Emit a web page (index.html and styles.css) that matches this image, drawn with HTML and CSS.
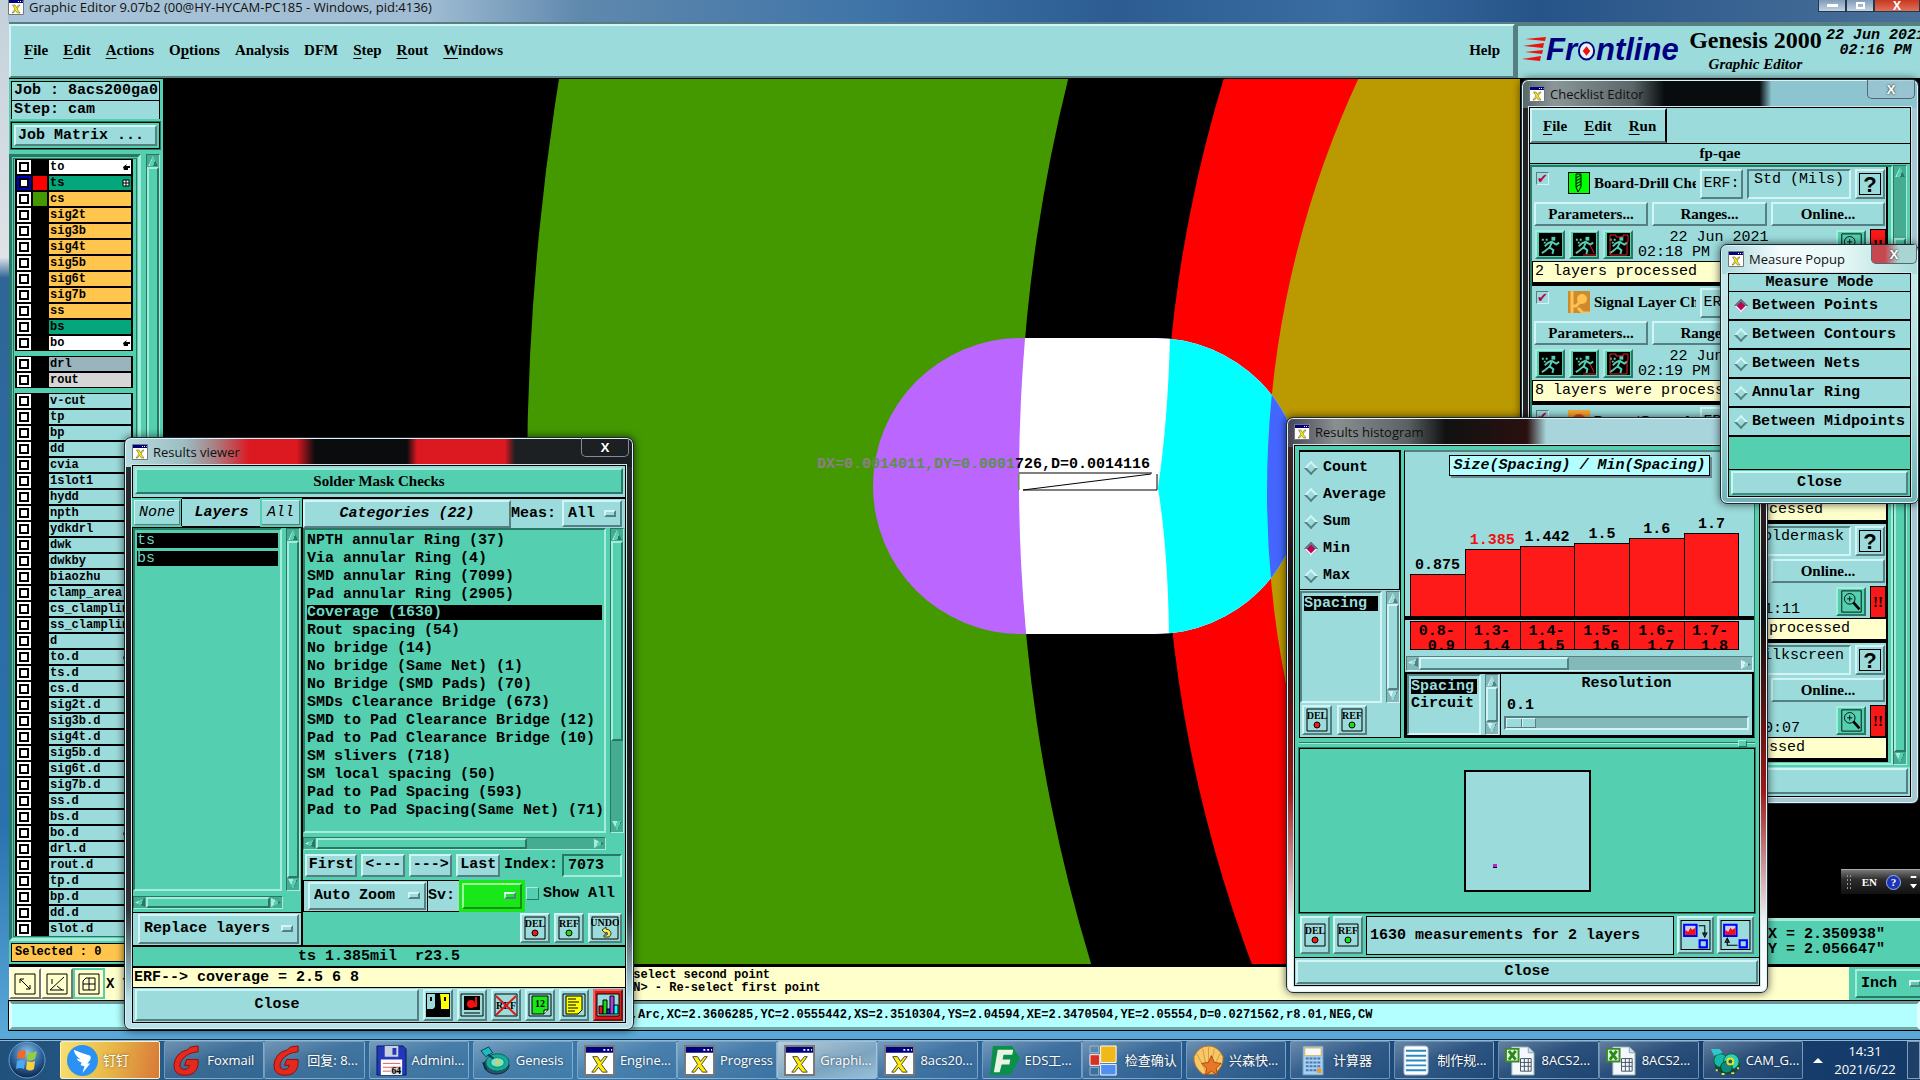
FILE: index.html
```html
<!DOCTYPE html>
<html lang="en">
<head>
    <meta charset="UTF-8">
    <meta name="viewport" content="width=device-width, initial-scale=1.0">
    <title>Graphic Editor 9.07b2</title>
    <link rel="stylesheet" href="styles.css">
</head>
<body>
    <!-- shared icons -->
    <svg class="defs" aria-hidden="true">
        <symbol id="i-x" viewBox="0 0 32 32">
            <path d="M1 1h30v30H1z" fill="#fff" stroke="#777" stroke-width="2"/>
            <path d="M2 2h28v6H2z" fill="#000080"/>
            <path d="M20 4h2v2h-2zM24 4h2v2h-2zM28 4h1v2h-1z" fill="#fff"/>
            <path d="M9 12h5l3 5 4-5h3l-6 8 6 8h-5l-4-5-4 5H8l6-8z" fill="#ffee00" stroke="#444" stroke-width="1"/>
        </symbol>
        <symbol id="i-del" viewBox="0 0 22 24">
            <path d="M1 1h20v22H1z" fill="none" stroke="#000"/>
            <text x="11" y="11" class="tiny">DEL</text>
            <circle cx="11" cy="17" r="3" fill="#f01818" stroke="#000"/>
        </symbol>
        <symbol id="i-ref" viewBox="0 0 22 24">
            <path d="M1 1h20v22H1z" fill="none" stroke="#000"/>
            <text x="11" y="11" class="tiny">REF</text>
            <circle cx="11" cy="17" r="3" fill="#18e018" stroke="#000"/>
        </symbol>
        <symbol id="i-undo" viewBox="0 0 28 24">
            <path d="M1 1h26v22H1z" fill="none" stroke="#000"/>
            <text x="14" y="10" class="tiny">UNDO</text>
            <path d="M15 11l-4 3 4 4v-2q3 1 1 3h-3v2h5q4-4 0-7l-3-1z" fill="#ffee44" stroke="#333"/>
        </symbol>
        <symbol id="i-run" viewBox="0 0 24 24">
            <path d="M0 0h24v24H0z" fill="#000"/>
            <path d="M13 4h4v4h-4z" fill="#54cfb0"/>
            <path d="M14 9l-3 6 4 3-1 4M11 15l-5 4-3 2M13 9l5 3 3-2M13 9l-4 2-3 3" fill="none" stroke="#54cfb0" stroke-width="2"/>
            <path d="M3 6h2v2H3zM7 6h2v2H7zM5 9h2v2H5z" fill="#54cfb0"/>
        </symbol>
        <symbol id="i-find" viewBox="0 0 24 26">
            <path d="M1 1h22v24H1z" fill="none" stroke="#000"/>
            <circle cx="10" cy="10" r="6" fill="none" stroke="#000"/>
            <path d="M10 7v6M7 10h6" stroke="#000"/>
            <path d="M14 14l7 8" stroke="#000" stroke-width="3"/>
        </symbol>
        <symbol id="i-drill" viewBox="0 0 22 22">
            <path d="M0 0h22v22H0z" fill="#0f0" stroke="#000" stroke-width="2"/>
            <path d="M8 2h5v13l-3 5-2-5zM8 6l5-3M8 9l5-3M8 12l5-3M8 15l5-3" fill="none" stroke="#000"/>
        </symbol>
        <symbol id="i-signal" viewBox="0 0 22 22">
            <path d="M0 0h22v22H0z" fill="#cf8a30"/>
            <path d="M4 0v22M4 15h4l4-4M10 17l5 5h7" fill="none" stroke="#ffc24c" stroke-width="3"/>
            <circle cx="14" cy="8" r="5" fill="#ffc24c"/>
        </symbol>
        <symbol id="i-power" viewBox="0 0 22 22">
            <path d="M0 0h22v22H0z" fill="#f8a830"/>
            <circle cx="11" cy="11" r="7" fill="#e84818"/>
            <circle cx="11" cy="11" r="2" fill="#f8d890"/>
        </symbol>
        <symbol id="i-excel" viewBox="0 0 32 32">
            <path d="M7 2h17l6 6v23H7z" fill="#f4f8fc" stroke="#8aa"/>
            <path d="M24 2v6h6" fill="#cde" stroke="#8aa"/>
            <path d="M16 14h11v13H16zM16 18h11M16 22h11M20 14v13M24 14v13" fill="none" stroke="#456"/>
            <path d="M1 4h13v13H1z" fill="#e8f4e0" stroke="#3a8a2a" stroke-width="2"/>
            <path d="M4 6l7 9M11 6l-7 9" stroke="#2a8a1a" stroke-width="3"/>
        </symbol>
        <symbol id="i-fox" viewBox="0 0 32 32">
            <path d="M28 1v6q-12 1-17 9-4 7 1 9 6 1 7-4h-5l2-6h12q1 14-10 16Q3 33 3 21 4 8 17 5l3-3z" fill="#e42a1c" stroke="#8a1010"/>
        </symbol>
        <symbol id="i-disk" viewBox="0 0 32 32">
            <path d="M1 1h27l3 3v27H1z" fill="#2238b8" stroke="#101860"/>
            <path d="M9 1h14v11H9z" fill="#c8d0e0"/>
            <path d="M17 3h4v7h-4z" fill="#2238b8"/>
            <path d="M5 15h22v16H5z" fill="#fff"/>
            <path d="M7 19h18M7 23h18M7 27h8" stroke="#d86060"/>
            <text x="21" y="30" class="tiny">64</text>
        </symbol>
        <symbol id="i-genesis" viewBox="0 0 32 32">
            <ellipse cx="17" cy="21" rx="13" ry="9" fill="#30506a" stroke="#102838"/>
            <ellipse cx="18" cy="18" rx="12" ry="9" fill="#18a8a0" stroke="#064"/>
            <ellipse cx="18" cy="18" rx="7" ry="5" fill="#80e0c8" stroke="#085"/>
            <circle cx="18" cy="18" r="2" fill="#e8d030"/>
            <path d="M1 6l8-4 4 6-7 4z" fill="#20b8c0" stroke="#045"/>
            <path d="M3 18l4 8M8 10l6 4" stroke="#083850" stroke-width="2"/>
        </symbol>
        <symbol id="i-cam" viewBox="0 0 32 32">
            <ellipse cx="18" cy="21" rx="13" ry="9" fill="#184838"/>
            <circle cx="11" cy="16" r="7" fill="#18b8a8" stroke="#064"/>
            <circle cx="22" cy="17" r="8" fill="#30d0b8" stroke="#064"/>
            <circle cx="17" cy="23" r="6" fill="#108880" stroke="#042"/>
            <circle cx="21" cy="17" r="4" fill="#f0e020"/>
            <circle cx="21" cy="17" r="2" fill="#0a6a60"/>
            <path d="M1 4h9l3 4-9 3z" fill="#30c8d0"/>
            <path d="M6 26h2M12 30h3M22 29h3M28 24h2" stroke="#e8e040" stroke-width="2"/>
        </symbol>
        <symbol id="i-eds" viewBox="0 0 32 32">
            <path d="M4 1h20l8 13-10 17H1z" fill="#0a9048"/>
            <path d="M9 5h16l-1 5h-9l-1 5h8l-1 5h-8l-2 8H5z" fill="#e8f4e4"/>
        </symbol>
        <symbol id="i-form" viewBox="0 0 32 32">
            <path d="M12 1h16v17H12z" fill="#f0b818" stroke="#fff"/>
            <path d="M1 10h10v11H1z" fill="#d83028" stroke="#fff"/>
            <path d="M12 20h16v11H12z" fill="#5090f0" stroke="#fff"/>
            <path d="M1 23h9v8H1zM1 1h9v7H1z" fill="none" stroke="#9bc"/>
        </symbol>
        <symbol id="i-shell" viewBox="0 0 32 32">
            <path d="M10 30Q0 22 1 12 6 1 16 1t15 11q1 10-9 18z" fill="#f8c868" stroke="#b87820"/>
            <path d="M14 29L4 9M15 29L10 4M16 29V2M17 29l5-25M18 29L28 9" stroke="#d89838"/>
            <path d="M19 11l3 7 7 1-5 5 1 7-6-4-6 4 1-7-5-5 7-1z" fill="#e87828" stroke="#a84810"/>
        </symbol>
        <symbol id="i-calc" viewBox="0 0 32 32">
            <path d="M6 1h21v30H6z" fill="#a8d0f0" stroke="#5888b0"/>
            <path d="M8 3h17v8H8z" fill="#f4fafc" stroke="#e8a848"/>
            <path d="M9 14h15M9 18h15M9 22h15M9 26h15" stroke="#4878b0" stroke-width="2" stroke-dasharray="3 1"/>
            <path d="M21 24h4v5h-4z" fill="#f09828"/>
        </symbol>
        <symbol id="i-note" viewBox="0 0 32 32">
            <path d="M5 1h20q3 0 3 3v24q0 3-3 3H5q-2 0-2-3V4q0-3 2-3z" fill="#fff" stroke="#9ac"/>
            <path d="M5 6h21M5 11h21M5 16h21M5 21h21M5 26h21" stroke="#2a8ac0" stroke-width="2"/>
        </symbol>
        <symbol id="i-ding" viewBox="0 0 32 32">
            <circle cx="16" cy="16" r="16" fill="#2a92f4"/>
            <path d="M7 5q9 4 17 6 2 3-3 8h3l-8 10 2-7-4-1 1-3q-4-1-5-4l4 1q-6-4-7-10z" fill="#fff"/>
        </symbol>
    </svg>

    <div class="desktop">
        <main class="editor">
            <header class="glass-title main-title">
                <svg class="ico16"><use href="#i-x"/></svg>
                <h1>Graphic Editor 9.07b2 (00@HY-HYCAM-PC185 - Windows, pid:4136)</h1>
                <div class="win-buttons">
                    <button type="button" aria-label="Minimize"><i class="min"></i></button>
                    <button type="button" aria-label="Restore"><i class="max"></i></button>
                    <button type="button" class="red" aria-label="Close window">X</button>
                </div>
            </header>

            <div class="topbar">
                <nav class="menubar raised">
                    <a href="#file"><u>F</u>ile</a>
                    <a href="#edit"><u>E</u>dit</a>
                    <a href="#actions"><u>A</u>ctions</a>
                    <a href="#options">O<u>p</u>tions</a>
                    <a href="#analysis">Analysis</a>
                    <a href="#dfm">DFM</a>
                    <a href="#step"><u>S</u>tep</a>
                    <a href="#rout"><u>R</u>out</a>
                    <a href="#windows"><u>W</u>indows</a>
                    <a href="#help" class="help">Help</a>
                </nav>
                <div class="brand sunken">
                    <div class="logo">
                        <svg class="speed" viewBox="0 0 24 26"><path d="M3 2l21-2-1 4zM1 9l21-3-1 5zM3 15l18-2-1 4zM0 22l19-3-1 5z" fill="#f01010"/></svg>
                        <span>Fr</span><svg class="target" viewBox="0 0 20 24"><ellipse cx="10" cy="13" rx="8" ry="9" fill="#e4f4f8" stroke="#000080" stroke-width="2"/><path d="M10 8l4 5-4 5-4-5z" fill="#f01010"/></svg><span>ntline</span>
                    </div>
                    <div class="product"><strong>Genesis 2000</strong><em>Graphic Editor</em></div>
                    <div class="stamp">22 Jun 2021<br>02:16 PM</div>
                </div>
            </div>

            <div class="workspace">
                <aside class="side">
                    <div class="field">Job : 8acs200ga0</div>
                    <div class="field">Step: cam</div>
                    <div class="matrix"><button type="button" class="raised">Job Matrix ...</button></div>
                    <div class="layer-wrap">
                        <div class="layers" id="layers"></div>
                        <div class="vbar green"><i class="up"></i><b></b><i class="down"></i></div>
                    </div>
                    <div class="selected">Selected : 0</div>
                </aside>
                <div class="canvas">
                    <svg viewBox="163 79 1357 886" preserveAspectRatio="xMinYMin slice" role="img" aria-label="Board view">
                        <defs>
                            <clipPath id="pad"><rect x="873" y="338" width="430" height="296" rx="148"/></clipPath>
                        </defs>
                        <path d="M163 79h1800v900H163z" fill="#000"/>
                        <circle cx="3055" cy="480" r="2528" fill="#449900"/>
                        <circle cx="2679" cy="480" r="1660" fill="#000"/>
                        <circle cx="2542" cy="480" r="1378" fill="#f00"/>
                        <circle cx="2247" cy="492" r="980" fill="#bb9900"/>
                        <g clip-path="url(#pad)">
                            <path d="M860 330h460v310H860z" fill="#bb66ff"/>
                            <circle cx="2679" cy="480" r="1660" fill="#fff"/>
                            <path d="M1170 336Q1168 420 1158 488Q1168 550 1169 636H1320V336z" fill="#0ff"/>
                            <circle cx="2247" cy="492" r="980" fill="#4466ff"/>
                        </g>
                        <path d="M1019 473h133M1023 490h134v-16M1023 490l128-16" fill="none" stroke="#000"/>
                        <path d="M1019 473v17" stroke="#449900"/>
                        <text x="817" y="468" class="measure"><tspan fill="#8d7f8a">DX=0.0</tspan><tspan fill="#5c8f4a">014011,DY=0.0001</tspan><tspan>726,D=0.0014116</tspan></text>
                    </svg>
                </div>
                <div class="right">
                    <div class="xy">X = 2.350938"<br>Y = 2.056647"</div>
                </div>
            </div>

            <div class="cmdbar">
                <div class="tools">
                    <button type="button" aria-label="Zoom"><svg viewBox="0 0 22 22"><path d="M1 1h20v20H1zM6 6l10 10M6 6h4M6 6v4M16 16h-4M16 16v-4" fill="none" stroke="#000"/></svg></button>
                    <button type="button" aria-label="Angle"><svg viewBox="0 0 22 22"><path d="M1 1h20v20H1zM4 17h14M4 17L18 4M6 6v5M11 13l5 4" fill="none" stroke="#000"/></svg></button>
                    <button type="button" class="on" aria-label="Grid"><svg viewBox="0 0 22 22"><path d="M1 1h20v20H1zM5 8l3-3h9v12H5zM5 11h12M11 5v12" fill="none" stroke="#000"/></svg></button>
                    <span>X Y</span>
                </div>
                <div class="messages">Next, select second point<br>&lt;M2 BTN&gt; - Re-select first point</div>
                <label class="option green-opt inch"><select aria-label="Units"><option>Inch</option></select></label>
            </div>
            <footer class="status"><span>Line,Arc,XC=2.3606285,YC=2.0555442,XS=2.3510304,YS=2.04594,XE=2.3470504,YE=2.05554,D=0.0271562,r8.01,NEG,CW</span></footer>
        </main>

        <!-- Results viewer -->
        <section class="window viewer">
            <header class="glass-title">
                <svg class="ico16"><use href="#i-x"/></svg>
                <h2>Results viewer</h2>
                <button type="button" class="close-x" aria-label="Close results viewer">X</button>
            </header>
            <div class="body">
                <div class="heading"><button type="button" class="raised green">Solder Mask Checks</button></div>
                <div class="panes">
                    <div class="pane-left">
                        <div class="pick">
                            <button type="button" class="raised">None</button>
                            <strong>Layers</strong>
                            <button type="button" class="raised">All</button>
                        </div>
                        <div class="list-row">
                            <ul class="listbox"><li class="sel">ts</li><li class="sel">bs</li></ul>
                            <div class="vbar green"><i class="up"></i><b></b><i class="down"></i></div>
                        </div>
                        <div class="hbar green"><i class="left"></i><b></b><i class="rgt"></i></div>
                        <div class="replace"><label class="option"><select aria-label="Layer action"><option>Replace layers</option></select></label></div>
                    </div>
                    <div class="pane-right">
                        <div class="cat-head">
                            <button type="button" class="raised">Categories (22)</button>
                            <label for="meas">Meas:</label>
                            <span class="option"><select id="meas"><option>All</option></select></span>
                        </div>
                        <div class="list-row">
                            <ul class="listbox">
                                <li>NPTH annular Ring (37)</li>
                                <li>Via annular Ring (4)</li>
                                <li>SMD annular Ring (7099)</li>
                                <li>Pad annular Ring (2905)</li>
                                <li class="sel">Coverage (1630)</li>
                                <li>Rout spacing (54)</li>
                                <li>No bridge (14)</li>
                                <li>No bridge (Same Net) (1)</li>
                                <li>No Bridge (SMD Pads) (70)</li>
                                <li>SMDs Clearance Bridge (673)</li>
                                <li>SMD to Pad Clearance Bridge (12)</li>
                                <li>Pad to Pad Clearance Bridge (10)</li>
                                <li>SM slivers (718)</li>
                                <li>SM local spacing (50)</li>
                                <li>Pad to Pad Spacing (593)</li>
                                <li>Pad to Pad Spacing(Same Net) (71)</li>
                            </ul>
                            <div class="vbar green part"><i class="up"></i><b></b><i class="down"></i></div>
                        </div>
                        <div class="hbar green part"><i class="left"></i><b></b><i class="rgt"></i></div>
                        <div class="step-row">
                            <button type="button" class="raised">First</button>
                            <button type="button" class="raised">&lt;---</button>
                            <button type="button" class="raised">---&gt;</button>
                            <button type="button" class="raised">Last</button>
                            <label for="index">Index:</label>
                            <input type="text" id="index" class="sunken" value="7073">
                        </div>
                        <div class="zoom-row">
                            <div class="zoom-box">
                                <label class="option"><select aria-label="Zoom mode"><option>Auto Zoom</option></select></label>
                                <label class="sv" for="sv">Sv:</label>
                                <span class="option lime"><select id="sv"><option></option></select></span>
                            </div>
                            <label class="show-all"><input type="checkbox">Show All</label>
                        </div>
                        <div class="undo-row">
                            <button type="button" class="raised icon" aria-label="Delete"><svg><use href="#i-del"/></svg></button>
                            <button type="button" class="raised icon" aria-label="Reference"><svg><use href="#i-ref"/></svg></button>
                            <button type="button" class="raised icon" aria-label="Undo"><svg><use href="#i-undo"/></svg></button>
                        </div>
                    </div>
                </div>
                <div class="info">ts 1.385mil&nbsp; r23.5</div>
                <div class="erf">ERF--&gt; coverage = 2.5 6 8</div>
                <div class="close-row">
                    <button type="button" class="raised wide">Close</button>
                    <button type="button" class="raised icon" aria-label="Contrast"><svg viewBox="0 0 24 24"><path d="M0 0h24v24H0z" fill="#000"/><path d="M1 1h8v13l-2 2H1z" fill="#9cdbdb"/><path d="M14 1h9v15h-8V9z" fill="#ff0"/><path d="M5 4v4M19 4v4" stroke="#000" stroke-width="2"/></svg></button>
                    <button type="button" class="raised icon" aria-label="Record"><svg viewBox="0 0 24 24"><path d="M1 1h22v22H1z" fill="#9cdbdb" stroke="#000"/><path d="M4 3h16v14H4z" fill="#000"/><circle cx="11" cy="11" r="4" fill="#f01010"/><path d="M16 4v9h-4" fill="none" stroke="#f01010" stroke-width="2"/><path d="M4 20h16" stroke="#000"/></svg></button>
                    <button type="button" class="raised icon" aria-label="Clear reference"><svg viewBox="0 0 24 24"><path d="M1 1h22v22H1z" fill="none" stroke="#000"/><text x="12" y="16" class="tiny">REF</text><path d="M2 3l20 19M22 3L2 22" stroke="#e01818" stroke-width="2"/></svg></button>
                    <button type="button" class="raised icon" aria-label="Numbers"><svg viewBox="0 0 24 24"><path d="M1 1h22v22H1z" fill="none" stroke="#000"/><path d="M4 3h16v14l-4 4H4z" fill="#1be81b" stroke="#000"/><path d="M16 21v-4h4" fill="#fff" stroke="#000"/><text x="12" y="14" class="tiny">12</text></svg></button>
                    <button type="button" class="raised icon" aria-label="Notes"><svg viewBox="0 0 24 24"><path d="M1 1h22v22H1z" fill="none" stroke="#000"/><path d="M4 3h16v14l-4 4H4z" fill="#ff0" stroke="#000"/><path d="M6 6h8M6 9h11M6 12h8M6 15h10M6 18h7" stroke="#000"/></svg></button>
                    <button type="button" class="raised icon hot" aria-label="Histogram"><svg viewBox="0 0 24 24"><path d="M1 1h22v22H1z" fill="#9cdbdb" stroke="#000"/><path d="M3 13h4v8H3z" fill="#f01010" stroke="#000"/><path d="M7 7h4v14H7z" fill="#18d818" stroke="#000"/><path d="M11 16h3v5h-3z" fill="#22f" stroke="#000"/><path d="M14 3h4v18h-4z" fill="#b040e0" stroke="#000"/><path d="M18 12h4v9h-4z" fill="#0ff" stroke="#000"/></svg></button>
                </div>
            </div>
        </section>

        <!-- Checklist editor -->
        <section class="window checklist">
            <header class="glass-title">
                <svg class="ico16"><use href="#i-x"/></svg>
                <h2>Checklist Editor</h2>
                <button type="button" class="close-x clear" aria-label="Close checklist editor">X</button>
            </header>
            <div class="body">
                <nav class="menubar small raised">
                    <a href="#c-file"><u>F</u>ile</a>
                    <a href="#c-edit"><u>E</u>dit</a>
                    <a href="#c-run"><u>R</u>un</a>
                </nav>
                <h3>fp-qae</h3>
                <div class="cards-wrap">
                    <div class="cards" id="cards"></div>
                    <div class="vbar green part"><i class="up"></i><b></b><i class="down"></i></div>
                </div>
                <button type="button" class="raised wide">Close</button>
            </div>
        </section>

        <!-- Results histogram -->
        <section class="window histogram">
            <header class="glass-title">
                <svg class="ico16"><use href="#i-x"/></svg>
                <h2>Results histogram</h2>
            </header>
            <div class="body">
                <div class="upper">
                    <div class="stats">
                        <div class="radios">
                            <label><input type="radio" name="stat">Count</label>
                            <label><input type="radio" name="stat">Average</label>
                            <label><input type="radio" name="stat">Sum</label>
                            <label><input type="radio" name="stat" checked>Min</label>
                            <label><input type="radio" name="stat">Max</label>
                        </div>
                        <div class="list-row">
                            <ul class="listbox"><li class="sel">Spacing</li></ul>
                            <div class="vbar"><i class="up"></i><b></b><i class="down"></i></div>
                        </div>
                        <div class="mini">
                            <button type="button" class="raised icon" aria-label="Delete bar"><svg><use href="#i-del"/></svg></button>
                            <button type="button" class="raised icon" aria-label="Reference bar"><svg><use href="#i-ref"/></svg></button>
                        </div>
                    </div>
                    <div class="chart">
                        <div class="chart-title">Size(Spacing) / Min(Spacing)</div>
                        <div class="bars" id="bars"></div>
                        <div class="ranges" id="ranges"></div>
                        <div class="hbar part"><i class="left"></i><b></b><i class="rgt"></i></div>
                        <div class="resolution">
                            <div class="list-row">
                                <ul class="listbox"><li class="sel">Spacing</li><li>Circuit</li></ul>
                                <div class="vbar"><i class="up"></i><b></b><i class="down"></i></div>
                            </div>
                            <div class="slider">
                                <label for="res">Resolution</label>
                                <output for="res">0.1</output>
                                <input type="range" id="res" min="0" max="10" value="0">
                            </div>
                        </div>
                    </div>
                </div>
                <div class="sash"><i></i></div>
                <div class="preview"><div class="board"><i></i></div></div>
                <div class="summary">
                    <button type="button" class="raised icon" aria-label="Delete all"><svg><use href="#i-del"/></svg></button>
                    <button type="button" class="raised icon" aria-label="Reference all"><svg><use href="#i-ref"/></svg></button>
                    <div class="count">1630 measurements for 2 layers</div>
                    <button type="button" class="raised icon big" aria-label="Send down"><svg viewBox="0 0 30 30"><path d="M1 1h28v28H1z" fill="none" stroke="#000"/><path d="M4 5h12v11H4z" fill="#cce" stroke="#00f" stroke-width="2"/><path d="M5 15v-5l3 2 2-4 2 2 3-2v7z" fill="#f01010"/><path d="M19 20h7v7h-7z" fill="none" stroke="#00f" stroke-width="2"/><path d="M18 6h6v9M22 13l2 4 2-4z" fill="none" stroke="#000"/></svg></button>
                    <button type="button" class="raised icon big" aria-label="Send up"><svg viewBox="0 0 30 30"><path d="M1 1h28v28H1z" fill="none" stroke="#000"/><path d="M4 5h12v11H4z" fill="#cce" stroke="#00f" stroke-width="2"/><path d="M5 15v-5l3 2 2-4 2 2 3-2v7z" fill="#f01010"/><path d="M19 20h7v7h-7z" fill="none" stroke="#00f" stroke-width="2"/><path d="M17 25H7v-5M5 22l2-4 2 4z" fill="none" stroke="#000"/></svg></button>
                </div>
                <div class="bottom"><button type="button" class="raised wide">Close</button></div>
            </div>
        </section>

        <!-- Measure popup -->
        <section class="window measure-popup">
            <header class="glass-title">
                <svg class="ico16"><use href="#i-x"/></svg>
                <h2>Measure Popup</h2>
                <button type="button" class="close-x clear warm" aria-label="Close measure popup">X</button>
            </header>
            <div class="body">
                <h3>Measure Mode</h3>
                <label><input type="radio" name="mode" checked>Between Points</label>
                <label><input type="radio" name="mode">Between Contours</label>
                <label><input type="radio" name="mode">Between Nets</label>
                <label><input type="radio" name="mode">Annular Ring</label>
                <label><input type="radio" name="mode">Between Midpoints</label>
                <div class="bottom"><button type="button" class="raised wide">Close</button></div>
            </div>
        </section>

        <div class="langbar"><i class="grip"></i><span>EN</span><b>?</b><i class="more"></i></div>

        <div class="taskbar" id="taskbar">
            <button type="button" class="start" aria-label="Start"><svg viewBox="0 0 38 38"><defs><radialGradient id="orb" cx=".5" cy=".3" r=".7"><stop offset="0" stop-color="#8cc4e8"/><stop offset=".6" stop-color="#2a5f98"/><stop offset="1" stop-color="#0c2448"/></radialGradient></defs><circle cx="19" cy="19" r="18" fill="url(#orb)" stroke="#6aa0c8"/><path d="M10 11q4-3 8-1l-1 8q-4-2-8 0z" fill="#f06a30"/><path d="M20 11q4 2 9-1l-2 8q-4 3-8 1z" fill="#90d040"/><path d="M9 20q4-2 8 0l-1 8q-4-2-8 0z" fill="#50a8f0"/><path d="M19 20q4 2 8 0l-1 8q-4 3-8 0z" fill="#f8d040"/></svg></button>
            <div class="tasks" id="tasks"></div>
            <i class="tray-arrow"></i>
            <div class="clock">14:31<br>2021/6/22</div>
            <button type="button" class="peek" aria-label="Show desktop"></button>
        </div>
    </div>

    <script>
        // layer name : row colour
        const groups = [
            ['to:white', 'ts:teal', 'cs:amber', 'sig2t:amber', 'sig3b:amber', 'sig4t:amber', 'sig5b:amber',
             'sig6t:amber', 'sig7b:amber', 'ss:amber', 'bs:teal', 'bo:white'],
            ['drl:slate', 'rout:grey'],
            'v-cut tp bp dd cvia 1slot1 hydd npth ydkdrl dwk dwkby biaozhu clamp_area cs_clampline ss_clampline d to.d ts.d cs.d sig2t.d sig3b.d sig4t.d sig5b.d sig6t.d sig7b.d ss.d bs.d bo.d drl.d rout.d tp.d bp.d dd.d slot.d'.split(' ')
        ];
        const swatches = { ts: 'red', cs: 'green' };
        const hand = '<svg viewBox="0 0 8 8"><path d="M1 4l4-3-1 2h4v2H6v2H2z"/></svg>';
        const grid = '<svg viewBox="0 0 8 8"><path d="M1 1h6v6H1zM4 1v6M1 4h6" fill="#fff" stroke="#000"/></svg>';
        const marks = { to: hand, bo: hand, 'to.d': hand, 'bo.d': hand, ts: grid };

        document.getElementById('layers').innerHTML = groups.map(group => `<div class="layer-group">${group.map(item => {
            const [name, color = 'sky'] = item.split(':');
            return `<label class="layer ${name === 'ts' ? 'current' : ''}"><input type="checkbox">
                <i class="${swatches[name] || ''}"></i><span class="${color}">${name}${marks[name] || ''}</span></label>`;
        }).join('')}</div>`).join('');

        const checks = [
            { name: 'Board-Drill Checks', icon: 'drill', erf: 'Std (Mils)', time: '02:18 PM - 0:00:03', msg: '2 layers processed' },
            { name: 'Signal Layer Checks', icon: 'signal', erf: 'Outer', time: '02:19 PM - 0:00:41', msg: '8 layers were processed' },
            { name: 'Power/Ground Checks', icon: 'power', erf: 'Mixed', time: '02:19 PM - 0:00:20', msg: '10 power-ground layers processed' },
            { name: 'Solder Mask Checks', icon: 'signal', erf: 'soldermask', time: '02:20 PM - 0:01:11', msg: '2 solder mask layers were processed' },
            { name: 'Silk Screen Checks', icon: 'power', erf: 'silkscreen', time: '02:21 PM - 0:00:07', msg: '2 silk screen layers processed' }
        ];
        document.getElementById('cards').innerHTML = checks.map((c, i) => `
            <article class="card">
                <div class="card-head">
                    <input type="checkbox" checked aria-label="${c.name}">
                    <svg class="kind"><use href="#i-${c.icon}"/></svg>
                    <strong>${c.name}</strong>
                    <button type="button" class="raised">ERF:</button>
                    <input type="text" class="sunken" value="${c.erf}" aria-label="ERF model ${i + 1}">
                    <button type="button" class="raised ask"><b>?</b></button>
                </div>
                <div class="card-buttons">
                    <button type="button" class="raised">Parameters...</button>
                    <button type="button" class="raised">Ranges...</button>
                    <button type="button" class="raised">Online...</button>
                </div>
                <div class="card-run">
                    <button type="button" class="raised green" aria-label="Run"><svg><use href="#i-run"/></svg></button>
                    <button type="button" class="raised green" aria-label="Run on feature"><svg><use href="#i-run"/><path d="M10 22h13M17 12l4 8" stroke="#e02020" fill="none"/></svg></button>
                    <button type="button" class="raised green" aria-label="Run in area"><svg><use href="#i-run"/><path d="M3 5V2h6v2h7V2h5v6l-1 2v12H3V10z" stroke="#e02020" fill="none"/></svg></button>
                    <time>22 Jun 2021<br>${c.time}</time>
                    <button type="button" class="raised green find" aria-label="View results"><svg><use href="#i-find"/></svg></button>
                    <b class="alert">!!</b>
                </div>
                <div class="card-msg">${c.msg}</div>
            </article>`).join('');

        const bins = [
            { v: 0.875, h: 42, from: '0.8', to: '0.9' },
            { v: 1.385, h: 67, from: '1.3', to: '1.4', hot: true },
            { v: 1.442, h: 70, from: '1.4', to: '1.5' },
            { v: 1.5, h: 73, from: '1.5', to: '1.6' },
            { v: 1.6, h: 78, from: '1.6', to: '1.7' },
            { v: 1.7, h: 83, from: '1.7', to: '1.8' }
        ];
        document.getElementById('bars').innerHTML = bins.map(b =>
            `<div class="${b.hot ? 'hot' : ''}"><span>${b.v}</span><i style="height:${b.h}px"></i></div>`).join('');
        document.getElementById('ranges').innerHTML = bins.map(b => `<div>${b.from}-<br>${b.to}</div>`).join('');

        // each inner array is one run of joined taskbar buttons
        const tasks = [
            [['ding', '钉钉', 'alerting']],
            [['fox', 'Foxmail'], ['fox', '回复: 8...']],
            [['disk', 'Admini...']],
            [['genesis', 'Genesis']],
            [['x', 'Engine...'], ['x', 'Progress'], ['x', 'Graphi...', 'active'], ['x', '8acs20...']],
            [['eds', 'EDS工...'], ['form', '检查确认']],
            [['shell', '兴森快...']],
            [['calc', '计算器']],
            [['note', '制作规...']],
            [['excel', '8ACS2...'], ['excel', '8ACS2...']],
            [['cam', 'CAM_G...']]
        ];
        document.getElementById('tasks').innerHTML = tasks.map(run => `<div class="run">${run.map(([icon, label, state = '']) =>
            `<button type="button" class="task ${state}"><svg><use href="#i-${icon}"/></svg>${label}</button>`).join('')}</div>`).join('');
    </script>
</body>
</html>
```
FILE: styles.css
```css
*, *::before, *::after {
    box-sizing: border-box;
}

:root {
    --sky: #9cdbdb;
    --sky-hi: #d2f4f4;
    --sky-lo: #557f80;
    --sea: #54cfb0;
    --sea-hi: #a6ecdb;
    --sea-lo: #2a7763;
    --cream: #ffffcc;
    --mono: "Liberation Mono", monospace;
    --serif: "Liberation Serif", serif;
    --ui: "Open Sans", "Noto Sans CJK SC", sans-serif;
}

body {
    margin: 0;
    font: bold 15px/18px var(--mono);
    color: #000;
    background: #1c4472;
    overflow: hidden;
}

h1, h2, h3, ul {
    margin: 0;
    padding: 0;
    list-style: none;
}

button, input, select {
    margin: 0;
    padding: 0;
    font: inherit;
    color: inherit;
    border: 0;
    border-radius: 0;
    background: none;
}

a {
    color: inherit;
    text-decoration: none;
}

.defs {
    position: absolute;
    width: 0;
    height: 0;
}

.tiny {
    font: bold 10px var(--serif);
    text-anchor: middle;
}

.desktop {
    position: relative;
    min-height: 100vh;
    display: flex;
    flex-direction: column;
}

/* bevels */
.raised {
    background: var(--sky);
    border: 2px solid;
    border-color: var(--sky-hi) var(--sky-lo) var(--sky-lo) var(--sky-hi);
}

.raised.green {
    background: var(--sea);
    border-color: var(--sea-hi) var(--sea-lo) var(--sea-lo) var(--sea-hi);
}

.sunken {
    border: 2px solid;
    border-color: var(--sky-lo) var(--sky-hi) var(--sky-hi) var(--sky-lo);
}

.wide {
    flex: 1;
}

.icon {
    width: 30px;
    height: 30px;
    display: grid;
    place-items: center;
}

.icon svg {
    width: 24px;
    height: 24px;
}

/* title bars */
.glass-title {
    display: flex;
    align-items: center;
    gap: 5px;
    font: 13px/18px var(--ui);
    color: #111;
}

.glass-title h1, .glass-title h2 {
    font: inherit;
    white-space: nowrap;
}

.ico16 {
    width: 16px;
    height: 16px;
    flex: none;
}

.main-title {
    height: 22px;
    padding: 0 0 8px;
    margin-left: -1px;
    background: linear-gradient(90deg, #a9c4d8, #9fbcd2 22%, #5f88ad 30%, #3f74a8 45%, #2c5c92 58%, #3a6da2 70%, #265489 80%, #4a7099);
}

.win-buttons {
    display: flex;
    align-self: flex-start;
    margin-left: auto;
}

.win-buttons button {
    width: 28px;
    height: 12px;
    border: 1px solid #203850;
    border-top: 0;
    background: linear-gradient(#7f9cb8, #c4d2de);
    display: grid;
    place-items: center;
}

.win-buttons .red {
    width: 46px;
    background: linear-gradient(#c83820, #e0705a);
    color: #fff;
    font: bold 12px/12px var(--ui);
}

.min {
    width: 11px;
    height: 3px;
    background: #fff;
}

.max {
    width: 9px;
    height: 7px;
    border: 2px solid #fff;
}

/* main window */
.editor {
    flex: 1;
    display: flex;
    flex-direction: column;
    border-style: solid;
    border-width: 0 0 8px 9px;
    border-image: linear-gradient(#c4d0da 0, #dfe3e8 25%, #2f6597 27%, #2a72ae 80%, #58a8d8) 1;
}

.topbar {
    display: flex;
    height: 57px;
    border-bottom: 1px solid #000;
    border-top: 2px solid var(--sky-lo);
    background: var(--sky);
}

.menubar {
    display: flex;
    align-items: center;
    gap: 15px;
    padding: 0 13px 2px;
    flex: 1;
    font: bold 15px/18px var(--serif);
}

.menubar u {
    text-underline-offset: 3px;
}

.help {
    margin-left: auto;
}

.brand {
    width: 405px;
    display: flex;
    border-width: 2px 0 0 3px;
    padding-left: 4px;
    overflow: hidden;
    white-space: nowrap;
}

.logo {
    display: flex;
    align-items: center;
    width: 164px;
    flex: none;
    font: italic bold 31px/40px "Liberation Sans", sans-serif;
    color: #000080;
    padding-bottom: 4px;
}

.speed {
    width: 24px;
    height: 26px;
    flex: none;
}

.target {
    width: 19px;
    height: 24px;
    flex: none;
}

.product {
    width: 139px;
    flex: none;
    text-align: center;
    font-family: var(--serif);
}

.product strong {
    display: block;
    font-size: 24px;
    line-height: 28px;
}

.product em {
    font-size: 15px;
    line-height: 20px;
}

.stamp {
    font-style: italic;
    line-height: 15px;
    padding: 2px 0 0 1px;
    text-align: center;
    flex: none;
}

.workspace {
    flex: 1;
    display: grid;
    grid-template-columns: 154px 1fr 400px;
    background: #000;
}

.side {
    background: var(--sea);
    padding: 2px 3px 2px 2px;
    display: flex;
    flex-direction: column;
}

.field {
    border: 1px solid #000;
    border-bottom-width: 0;
    background: var(--sky);
    height: 19px;
    padding-left: 2px;
    white-space: nowrap;
    overflow: hidden;
}

.matrix {
    border: 1px solid #000;
    padding: 2px;
    margin-top: 3px;
    outline: 1px solid var(--sea-lo);
}

.matrix button {
    width: 100%;
    height: 21px;
    text-align: left;
    padding-left: 2px;
    line-height: 17px;
}

.field + .matrix {
    box-shadow: 0 -4px 0 -3px #000;
}

.layer-wrap {
    display: flex;
    justify-content: space-between;
    margin: 5px 0 2px -2px;
}

.layers {
    width: 132px;
    padding: 2px 5px 1px 3px;
    border: 3px solid;
    border-color: var(--sea-lo) var(--sea-hi) var(--sea-hi) var(--sea-lo);
    outline: 1px solid var(--sea-lo);
    outline-offset: -5px;
    display: flex;
    flex-direction: column;
    gap: 5px;
}

.layer-group {
    background: #000;
}

.layer {
    display: grid;
    grid-template-columns: 14px 14px 1fr;
    gap: 2px;
    height: 16px;
    padding: 1px 2px;
    font-size: 12px;
    line-height: 14px;
}

.layer input {
    appearance: none;
    width: 14px;
    height: 14px;
    background: #fff;
    border: 2px solid #fff;
    box-shadow: inset 0 0 0 2px #000;
}

.layer.current input {
    border-color: #0000c0;
}

.layer i.red { background: #f00; }
.layer i.green { background: #449900; }

.layer span {
    display: flex;
    align-items: center;
    justify-content: space-between;
    padding: 0 1px 0 1px;
    overflow: hidden;
    white-space: nowrap;
}

.layer svg {
    width: 8px;
    height: 8px;
}

.white { background: #fff; }
.teal { background: #04a67c; }
.amber { background: #ffc54c; }
.slate { background: #9ab4be; }
.grey { background: #d6d6d6; }
.sky { background: var(--sky); }

.selected {
    border: 1px solid #000;
    background: #ffc54c;
    height: 19px;
    padding-left: 3px;
    font-size: 12px;
    line-height: 17px;
}

.canvas {
    position: relative;
    overflow: hidden;
}

.canvas > svg {
    position: absolute;
    inset: 0;
    width: 100%;
    height: 100%;
}

.measure {
    font: bold 15px var(--mono);
}

.right {
    display: flex;
    align-items: flex-end;
}

.xy {
    width: 100%;
    background: var(--sea);
    border-top: 3px solid var(--sea-hi);
    padding: 6px 0 7px 248px;
    line-height: 15px;
}

.cmdbar {
    display: flex;
    background: var(--cream);
    border-top: 3px solid #000;
    height: 36px;
}

.tools {
    display: flex;
    width: 581px;
    align-items: center;
    font-size: 14px;
}

.tools button {
    width: 32px;
    height: 31px;
    border: 2px solid #fffff0;
    border-right-color: #777;
    border-bottom-color: #777;
    display: grid;
    place-items: center;
    background: var(--cream);
}

.tools button.on {
    border-color: var(--sea);
}

.tools svg {
    width: 22px;
    height: 22px;
}

.tools span {
    margin-left: 1px;
}

.messages {
    font-size: 12px;
    line-height: 13px;
    padding-top: 2px;
    flex: 1;
}

/* option menus */
.option {
    position: relative;
    display: inline-flex;
    background: var(--sky);
    border: 2px solid;
    border-color: var(--sky-hi) var(--sky-lo) var(--sky-lo) var(--sky-hi);
}

.option::after {
    content: "";
    position: absolute;
    right: 4px;
    top: 50%;
    width: 12px;
    height: 7px;
    margin-top: -4px;
    border: 2px solid;
    border-color: var(--sky-hi) var(--sky-lo) var(--sky-lo) var(--sky-hi);
}

.option select {
    appearance: none;
    width: 100%;
    padding: 0 4px;
}

.green-opt {
    background: var(--sea);
    border-color: var(--sea-hi) var(--sea-lo) var(--sea-lo) var(--sea-hi);
}

.inch {
    width: 72px;
    margin: 2px -7px 2px 0;
    outline: 6px solid var(--sea);
    clip-path: inset(-2px 7px -2px -8px);
}

.status {
    height: 29px;
    margin: 1px 0;
    padding: 0 0 0 590px;
    font-size: 12px;
    line-height: 22px;
    white-space: nowrap;
    background: #b3ffff;
    border: 3px solid;
    border-color: #6f9494 #e0ffff #6fa8a8 #e0ffff;
    outline: 1px solid #000;
    overflow: hidden;
}

/* scrollbars */
.vbar, .hbar {
    display: flex;
    background: #84b9b9;
    border: 1px solid;
    border-color: var(--sky-lo) var(--sky-hi) var(--sky-hi) var(--sky-lo);
}

.vbar {
    flex-direction: column;
    width: 14px;
    flex: none;
}

.hbar {
    height: 13px;
}

.vbar.green, .hbar.green {
    background: #45ac92;
    border-color: var(--sea-lo) var(--sea-hi) var(--sea-hi) var(--sea-lo);
}

.vbar b, .hbar b {
    flex: 1;
    background: var(--sky);
    border: 2px solid;
    border-color: var(--sky-hi) var(--sky-lo) var(--sky-lo) var(--sky-hi);
}

.green > b {
    background: var(--sea);
    border-color: var(--sea-hi) var(--sea-lo) var(--sea-lo) var(--sea-hi);
}

.vbar i, .hbar i {
    flex: none;
    width: 12px;
    height: 12px;
    background: linear-gradient(110deg, var(--sky-hi) 40%, var(--sky) 40% 62%, var(--sky-lo) 62%);
}

.green > i {
    background: linear-gradient(110deg, var(--sea-hi) 40%, var(--sea) 40% 62%, var(--sea-lo) 62%);
}

.up { clip-path: polygon(50% 8%, 90% 92%, 10% 92%); }
.down { clip-path: polygon(50% 92%, 90% 8%, 10% 8%); }
.left { clip-path: polygon(8% 50%, 92% 10%, 92% 90%); }
.rgt { clip-path: polygon(92% 50%, 8% 10%, 8% 90%); }

.hbar i {
    height: 11px;
}

.vbar.part b {
    flex: none;
    height: 70%;
}

.vbar.part .down, .hbar.part .rgt {
    margin: auto 0 0 auto;
}

.hbar.part b {
    flex: none;
    width: 70%;
}

/* floating windows */
.window {
    position: absolute;
    display: flex;
    flex-direction: column;
    padding: 0 7px 6px;
    border: 1px solid #1a2a34;
    border-radius: 7px;
    box-shadow: inset 0 0 0 1px #dff2f6, 0 0 8px #000a;
}

.window > .glass-title {
    height: 27px;
}

.window > .body {
    flex: 1;
    display: flex;
    flex-direction: column;
    outline: 1px solid #cfe6ea;
    border: 1px solid #000;
    background: var(--sky);
    min-height: 0;
}

.close-x {
    align-self: flex-start;
    margin-left: auto;
    width: 48px;
    height: 19px;
    border: 1px solid #889;
    border-top: 0;
    border-radius: 0 0 5px 5px;
    color: #fff;
    font: bold 13px/16px var(--ui);
    text-shadow: 0 0 2px #000;
}

.close-x.clear {
    background: #9cc4d0aa;
    border-color: #567;
}

.close-x.warm {
    background: linear-gradient(90deg, #c84850 30%, #a8d4d4 60%);
}

.listbox {
    flex: 1;
    min-width: 0;
    border: 2px solid;
    border-color: var(--sea-lo) var(--sea-hi) var(--sea-hi) var(--sea-lo);
    padding: 3px 2px;
    overflow: hidden;
}

.listbox li {
    white-space: nowrap;
    line-height: 15px;
    margin-bottom: 3px;
}

.listbox .sel {
    background: #000;
    color: #6fd8c0;
}

.list-row {
    display: flex;
    gap: 4px;
}

/* results viewer */
.viewer {
    left: 124px;
    top: 437px;
    width: 510px;
    height: 593px;
    font-weight: normal;
    background: linear-gradient(90deg, #b8dce0 0, #9cbcc0 60px, #a88084 90px, #dc1820 125px 172px, #0a0c0e 190px 282px, #dc1820 292px 380px, #1c2022 390px) top/100% 29px no-repeat,
        linear-gradient(#2a2e30 0, #121618 45%, #2c3438 80%, #b8e0e8 95%);
}

.viewer .close-x {
    margin-right: -3px;
}

.viewer .body > * {
    flex: none;
}

.heading {
    padding: 2px 2px 3px;
    border-bottom: 2px solid #000;
}

.heading button {
    width: 100%;
    height: 26px;
    font: bold 15px/18px var(--serif);
}

.viewer .panes {
    display: grid;
    grid-template-columns: 170px 1fr;
    flex: 1;
    border-bottom: 2px solid #000;
    background: var(--sea);
    min-height: 0;
}

.pane-left {
    border-right: 2px solid #000;
    display: flex;
    flex-direction: column;
    min-height: 0;
}

.pane-left .list-row, .pane-right .list-row {
    flex: 1;
    min-height: 0;
    padding-right: 1px;
}

.pick {
    display: flex;
    height: 29px;
    border-bottom: 2px solid #000;
    background: var(--sky);
    font-style: italic;
}

.pick button {
    width: 48px;
    outline: 2px solid var(--sea);
    outline-offset: -1px;
    font-style: italic;
}

.pick button + strong, .pick strong + button {
    border-left: 1px solid #000;
}

.pick strong {
    flex: 1;
    text-align: center;
    line-height: 27px;
}

.pick strong + button {
    width: 40px;
}

.pane-left .hbar {
    margin: 5px 18px 3px 0;
}

.replace {
    border-top: 1px solid #000;
    padding: 1px 2px 1px 5px;
    background: var(--sky);
    height: 33px;
    display: flex;
}

.viewer .option {
    font-weight: bold;
}

.replace .option {
    flex: 1;
}

.pane-right {
    display: flex;
    flex-direction: column;
    min-height: 0;
    min-width: 0;
}

.viewer .pane-right li, .info, .erf, .step-row, .show-all, .viewer .close-row {
    font-weight: bold;
}

.cat-head {
    display: flex;
    background: var(--sky);
    height: 29px;
    font-weight: bold;
    align-items: center;
    padding-right: 3px;
}

.cat-head button {
    width: 208px;
    height: 28px;
    font-style: italic;
}

.cat-head label {
    margin-right: auto;
}

.cat-head .option {
    width: 60px;
    height: 27px;
}

.pane-right .hbar {
    margin: 4px 19px 3px 0;
}

.pane-right .vbar.part b {
    height: 66%;
}

.step-row {
    display: flex;
    gap: 4px;
    padding: 0 3px 2px 2px;
    align-items: center;
    height: 26px;
}

.step-row button {
    height: 23px;
    width: 44px;
    line-height: 18px;
}

.step-row button:first-child {
    width: 53px;
}

.step-row input {
    width: 60px;
    height: 23px;
    padding-left: 4px;
    margin-left: auto;
    border-color: var(--sea-lo) var(--sea-hi) var(--sea-hi) var(--sea-lo);
}

.zoom-row {
    display: flex;
    align-items: center;
    justify-content: space-between;
    padding-right: 10px;
    height: 33px;
}

.zoom-box {
    display: flex;
    border: 1px solid #000;
    height: 32px;
    background: var(--sky);
    font-weight: bold;
}

.zoom-box label.option {
    width: 118px;
    margin: 1px 1px 1px 4px;
}

.sv {
    line-height: 30px;
    border-left: 1px solid #000;
    padding-right: 3px;
}

.lime {
    width: 60px;
    margin: 2px 2px 2px 4px;
    background: #18e818;
    border-color: #a0f8a0 #189018 #189018 #a0f8a0;
    outline: 3px solid #18e818;
}

.show-all {
    display: flex;
    align-items: center;
    gap: 4px;
    padding-bottom: 4px;
}

.show-all input {
    appearance: none;
    width: 13px;
    height: 13px;
    border: 1px solid;
    border-color: var(--sea-hi) var(--sea-lo) var(--sea-lo) var(--sea-hi);
}

.undo-row {
    display: flex;
    justify-content: flex-end;
    gap: 4px;
    padding: 1px 3px 2px;
}

.undo-row .icon:last-child {
    width: 34px;
}

.undo-row .icon:last-child svg {
    width: 28px;
}

.info {
    background: var(--sea);
    border-bottom: 2px solid #000;
    height: 21px;
    line-height: 20px;
    text-align: center;
}

.erf {
    background: var(--cream);
    border-bottom: 1px solid #000;
    height: 20px;
    line-height: 20px;
    padding-left: 1px;
}

.close-row {
    display: flex;
    gap: 4px;
    height: 34px;
    padding: 1px 2px;
}

.close-row .icon, .close-row .wide {
    height: 32px;
}

.close-row .hot {
    background: #e01818;
    border-color: #f06060 #801010 #801010 #f06060;
}

/* checklist editor */
.checklist {
    left: 1521px;
    top: 79px;
    width: 398px;
    height: 725px;
    background: linear-gradient(90deg, #0000 60%, #8cc4d0 63%) top/100% 28px no-repeat,
        linear-gradient(90deg, #566 0, #8a9698 8%, #5c6668 28%, #080c0e 36%) top/100% 28px no-repeat,
        linear-gradient(90deg, #222 0 50%, #a8c8d4 50%);
}

.checklist .close-x {
    margin-right: -4px;
}

.menubar.small {
    flex: none;
    width: 137px;
    height: 35px;
    padding: 0 11px;
    gap: 17px;
    border-right: 2px solid #000;
}

.checklist h3, .measure-popup h3 {
    border: 1px solid #000;
    border-width: 1px 0;
    text-align: center;
}

.checklist h3 {
    font: bold 15px/19px var(--serif);
}

.cards-wrap {
    flex: 1;
    min-height: 0;
    display: flex;
    justify-content: space-between;
    background: var(--sea);
    padding: 1px 3px 2px 0;
}

.cards {
    width: 363px;
    border: 2px solid;
    border-color: var(--sea-lo) var(--sea-hi) var(--sea-hi) var(--sea-lo);
    padding-right: 3px;
    overflow: hidden;
}

.checklist .vbar.part b {
    height: 86%;
    margin-top: auto;
}

.checklist .vbar.part .down {
    margin-top: 0;
}

.card {
    height: 119px;
    background: var(--sky);
    border-right: 2px solid #000;
    border-bottom: 3px solid #000;
    font-weight: normal;
    display: flex;
    flex-direction: column;
}

.card-head {
    display: flex;
    height: 34px;
    padding: 2px 1px 2px 4px;
    gap: 4px;
}

.card-head input[type=checkbox] {
    appearance: none;
    width: 13px;
    height: 13px;
    flex: none;
    margin: 3px 15px 0 0;
    border: 1px solid;
    border-color: var(--sky-lo) var(--sky-hi) var(--sky-hi) var(--sky-lo);
    font: bold 13px/11px "DejaVu Sans", sans-serif;
    color: #b8004c;
}

.card-head input:checked::before {
    content: "✔";
}

.kind {
    width: 22px;
    height: 22px;
    margin-top: 3px;
    flex: none;
}

.card-head strong {
    flex: 1;
    font: bold 15px/28px var(--serif);
    white-space: nowrap;
    overflow: hidden;
}

.card-head .raised {
    width: 43px;
}

.card-head input[type=text] {
    width: 104px;
    padding: 0 0 8px 5px;
}

.card-head .ask {
    width: 30px;
    padding: 2px;
}

.ask b {
    display: block;
    height: 100%;
    border: 1px solid #000;
    font: bold 22px/21px "Liberation Sans", sans-serif;
}

.card-buttons {
    display: grid;
    grid-template-columns: 114px 1fr 114px;
    gap: 4px;
    padding: 1px 1px 0 2px;
}

.card-buttons button {
    height: 24px;
    font: bold 15px/18px var(--serif);
}

.card-run {
    display: flex;
    gap: 4px;
    height: 35px;
    padding: 4px 0 0 3px;
}

.card-run button {
    width: 30px;
    height: 29px;
    flex: none;
}

.card-run svg {
    width: 23px;
    height: 23px;
    display: block;
    margin: auto;
}

.card-run time {
    flex: 1;
    line-height: 15px;
    white-space: nowrap;
    text-align: center;
    margin: 0 30px 0 -1px;
    min-width: 162px;
}

.card-run .find {
    margin-left: auto;
}

.alert {
    width: 16px;
    flex: none;
    margin: -1px 0 0;
    background: #f81818;
    border: 1px solid #000;
    text-align: center;
    line-height: 30px;
    font-family: var(--serif);
}

.card-msg {
    flex: 1;
    background: var(--cream);
    border: 1px solid #000;
    border-right: 0;
    line-height: 19px;
    padding-left: 2px;
    white-space: nowrap;
}

.checklist .wide {
    flex: none;
    height: 26px;
    margin: 1px 2px 2px;
}

/* results histogram */
.histogram {
    left: 1286px;
    top: 417px;
    width: 482px;
    height: 576px;
    background: linear-gradient(90deg, #445 0, #8a8f90 10%, #5c6264 25%, #111 33%, #2a1010 50%, #a8d4dc 54%) top/100% 29px no-repeat,
        linear-gradient(#48282c 0, #101010 35%, #a01818 65%, #eef6f8 88%, #fff);
}

.histogram > .body {
    background: var(--sea);
    padding: 4px 4px 0;
}

.histogram .listbox, .histogram .sunken {
    border-color: var(--sky-lo) var(--sky-hi) var(--sky-hi) var(--sky-lo);
}

.histogram .listbox .sel {
    color: var(--sky);
}

.upper {
    display: grid;
    grid-template-columns: 102px 1fr;
    gap: 3px;
    height: 288px;
}

.stats, .chart {
    background: var(--sky);
    border: 1px solid #000;
    display: flex;
    flex-direction: column;
    min-width: 0;
}

.radios {
    border: 1px solid #000;
    border-width: 1px 1px 1px 0;
    padding: 2px 0 0 6px;
}

.radios label {
    display: flex;
    align-items: center;
    height: 27px;
    gap: 7px;
}

.histogram .stats .list-row {
    flex: 1;
    padding: 1px 0 2px;
}

input[type=radio] {
    appearance: none;
    width: 10px;
    height: 10px;
    flex: none;
    transform: rotate(45deg);
    border: 2px solid;
    border-color: var(--sky-hi) var(--sky-lo) var(--sky-lo) var(--sky-hi);
}

input[type=radio]:checked {
    background: #c00050;
    border-color: var(--sky-lo) var(--sky-hi) var(--sky-hi) var(--sky-lo);
}

.mini {
    display: flex;
    gap: 5px;
    padding: 0 2px 2px;
}

.chart {
    border-top: 2px solid var(--sky-lo);
    border-right-color: var(--sea-lo);
}

.chart-title {
    align-self: center;
    margin: 3px 0 0 0;
    padding: 1px 3px 0;
    border: 1px solid #000;
    background: #b3ffff;
    box-shadow: 2px 2px 0 #6a8a90;
    font-style: italic;
}

.bars, .ranges {
    display: grid;
    grid-template-columns: repeat(6, 1fr);
    padding: 0 15px 0 5px;
}

.bars {
    height: 144px;
    border-bottom: 4px solid #000;
}

.bars div {
    display: flex;
    flex-direction: column;
    justify-content: flex-end;
    text-align: center;
    line-height: 16px;
}

.bars i {
    background: #ff1a1a;
    border: 1px solid #000;
    border-bottom: 0;
    border-right: 0;
}

.bars div:last-child i, .ranges div:last-child {
    border-right: 1px solid #000;
}

.bars .hot span {
    color: #f01010;
}

.ranges {
    margin-top: 1px;
    height: 35px;
}

.ranges div {
    height: 29px;
    background: #ff1a1a;
    border: 1px solid #000;
    border-right: 0;
    line-height: 15px;
    padding: 2px 10px 0 0;
    text-align: right;
}

.chart > .hbar {
    margin: 0 1px;
    height: 15px;
    flex: none;
}

.chart > .hbar b {
    width: 150px;
}

.resolution {
    flex: 1;
    border: 2px solid #000;
    margin-top: 1px;
    display: grid;
    grid-template-columns: 92px 1fr;
    gap: 1px;
    min-height: 0;
}

.resolution .listbox li {
    margin-bottom: 2px;
}

.slider {
    border-left: 1px solid #000;
    display: flex;
    flex-direction: column;
    padding: 1px 3px;
}

.slider label {
    text-align: center;
}

.slider output {
    padding: 4px 0 1px 3px;
}

.slider input {
    appearance: none;
    width: 100%;
    height: 14px;
    background: #84b9b9;
    border: 2px solid;
    border-color: var(--sky-lo) var(--sky-hi) var(--sky-hi) var(--sky-lo);
}

.slider input::-webkit-slider-thumb {
    appearance: none;
    width: 30px;
    height: 10px;
    background: linear-gradient(90deg, var(--sky) 14px, var(--sky-lo) 14px 15px, var(--sky-hi) 15px 16px, var(--sky) 16px);
    border: 1px solid;
    border-color: var(--sky-hi) var(--sky-lo) var(--sky-lo) var(--sky-hi);
}

.sash {
    height: 10px;
    display: flex;
    justify-content: flex-end;
    align-items: center;
    padding-right: 8px;
    background: linear-gradient(#0000 4px, var(--sea-lo) 4px 5px, var(--sea-hi) 5px 6px, #0000 6px);
}

.sash i {
    width: 9px;
    height: 7px;
    background: var(--sea);
    border: 1px solid;
    border-color: var(--sea-hi) var(--sea-lo) var(--sea-lo) var(--sea-hi);
}

.preview {
    flex: 1;
    border: 1px solid #000;
    outline: 1px solid var(--sea-lo);
    display: flex;
    justify-content: center;
    align-items: center;
}

.board {
    width: 127px;
    height: 122px;
    border: 2px solid #000;
    background: var(--sky);
    padding: 92px 0 0 27px;
}

.board i {
    display: block;
    width: 4px;
    height: 4px;
    background: #c818d8;
    border-bottom: 1px solid #000;
}

.summary {
    display: flex;
    gap: 3px;
    height: 45px;
    padding: 3px 5px 2px;
    border-bottom: 1px solid #000;
    margin: 0 -4px;
}

.summary .icon {
    height: 38px;
}

.summary .big {
    width: 37px;
}

.summary .big svg {
    width: 31px;
    height: 32px;
}

.count {
    flex: 1;
    border: 1px solid #000;
    background: var(--sky);
    line-height: 38px;
    padding-left: 3px;
    white-space: nowrap;
}

.bottom {
    display: flex;
    height: 27px;
    margin: 0 -4px;
    padding: 2px 1px 1px;
    background: var(--sky);
}

/* measure popup */
.measure-popup {
    left: 1720px;
    top: 244px;
    width: 199px;
    height: 260px;
    background: linear-gradient(90deg, #a8d8dc, #f4fcfd 30%, #e8f8f8 60%, #a8dcd8) top/100% 29px no-repeat,
        linear-gradient(#cdeef0, #a8d8d8 60%, #70b4b8);
}

.measure-popup > .glass-title {
    height: 28px;
}

.measure-popup .close-x {
    margin-right: -6px;
    width: 46px;
}

.measure-popup .body {
    background: var(--sea);
}

.measure-popup h3 {
    font: inherit;
    line-height: 17px;
    height: 18px;
    background: var(--sky);
    border-top: 0;
}

.measure-popup label {
    display: flex;
    align-items: center;
    gap: 6px;
    height: 29px;
    padding-left: 7px;
    background: var(--sky);
    border-bottom: 2px solid #000;
    white-space: nowrap;
}

.measure-popup .bottom {
    margin: auto 0 0;
    border-top: 1px solid #000;
    background: var(--sea);
    padding: 1px 2px;
}

/* language bar */
.langbar {
    position: absolute;
    right: 0;
    top: 869px;
    width: 79px;
    height: 25px;
    display: flex;
    align-items: center;
    gap: 9px;
    padding: 0 3px 0 5px;
    background: linear-gradient(#777, #2c2c2c 40%, #111);
    border-top: 1px solid #aaa;
    color: #fff;
    font: bold 11px/14px var(--serif);
}

.grip {
    width: 7px;
    height: 17px;
    background: radial-gradient(circle, #999 1px, #0000 1px) 0 0/3px 4px;
}

.langbar b {
    width: 15px;
    height: 15px;
    flex: none;
    border-radius: 50%;
    background: #1c34b8;
    border: 1px solid #99b0f0;
    text-align: center;
    line-height: 13px;
}

.more {
    width: 7px;
    height: 13px;
    flex: none;
    background: #fff;
    clip-path: polygon(10% 0, 90% 0, 90% 20%, 10% 20%, 10% 65%, 100% 65%, 50% 100%, 0 65%, 10% 65%);
}

/* taskbar */
.taskbar {
    position: relative;
    display: flex;
    align-items: center;
    height: 41px;
    border-top: 1px solid #0a2038;
    box-shadow: inset 0 1px 0 #8db8d8;
    background: linear-gradient(90deg, #20507c, #3a78a8 30%, #2c6296 55%, #174070 80%, #143a68);
    font: 13px/18px var(--ui);
    color: #fff;
}

.start {
    width: 54px;
    height: 38px;
    display: grid;
    place-items: center;
}

.start svg {
    width: 38px;
    height: 38px;
}

.tasks {
    flex: 1;
    display: flex;
    gap: 4px;
    padding: 1px 10px 1px 6px;
    height: 40px;
    min-width: 0;
}

.run {
    display: flex;
    flex: 1 1 0;
}

.run:has(.task:nth-child(2)) {
    flex-grow: 2;
}

.run:has(.task:nth-child(4)) {
    flex-grow: 4;
}

.task {
    flex: 1 1 0;
    min-width: 0;
    display: flex;
    align-items: center;
    gap: 5px;
    padding: 0 0 0 6px;
    white-space: nowrap;
    overflow: hidden;
    border: 1px solid #a8c8e088;
    border-radius: 2px;
    background: linear-gradient(160deg, #ffffff55, #ffffff18 45%, #ffffff08);
    text-shadow: 0 0 3px #0008;
}

.task svg {
    width: 31px;
    height: 31px;
    flex: none;
}

.task.alerting {
    background: linear-gradient(100deg, #f8e070, #e8b848 50%, #d87838);
    border-color: #fff0c0;
}

.task.active {
    background: linear-gradient(160deg, #b8ccd8, #7ca4c0 60%, #98c0d8);
}

.tray-arrow {
    border: 5px solid #0000;
    border-top: 0;
    border-bottom-color: #fff;
}

.clock {
    width: 84px;
    text-align: center;
}

.peek {
    width: 13px;
    height: 38px;
    border: 1px solid #7f9cb8;
    background: #1e4068;
}
```
